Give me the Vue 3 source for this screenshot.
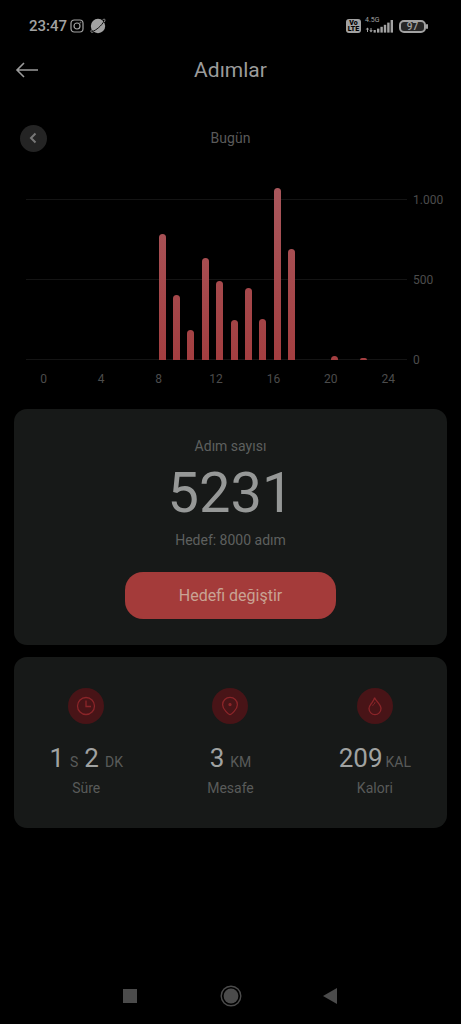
<script setup>
const bars = [
  0, 0, 0, 0, 0, 0, 0, 0, 785, 405, 187, 631, 490, 250, 450, 256, 1068, 687, 0, 0, 28, 0, 14, 0,
]
const chartMax = 1000
const hours = [0, 4, 8, 12, 16, 20, 24]
const levels = ['1.000', '500', '0']
const stats = [
  { icon: 'clock', label: 'Süre', parts: [['1', 'S'], ['2', 'DK']] },
  { icon: 'pin', label: 'Mesafe', parts: [['3', 'KM']] },
  { icon: 'flame', label: 'Kalori', parts: [['209', 'KAL']] },
]
</script>

<template>
  <div class="page">
    <div class="status">
      <span class="clock">23:47</span>
      <svg class="insta" width="14" height="14" viewBox="0 0 14 14" fill="none" stroke="currentColor">
        <rect x="1" y="1" width="12" height="12" rx="3.2" stroke-width="1.2" />
        <circle cx="7" cy="7" r="3" stroke-width="1.2" />
        <circle cx="10.4" cy="3.6" r="0.5" stroke-width="0.6" />
      </svg>
      <svg class="planet" width="16" height="16" viewBox="0 0 16 16">
        <circle cx="8" cy="8" r="7.2" fill="currentColor" />
        <path d="M2 13.6C6.4 12.2 11.4 7.8 14.2 3" stroke="#000" stroke-width="0.9" fill="none" />
        <path d="M1.6 11.6C0.4 13.8 0.8 15 3.4 14M12.6 1.8C14.8 0.6 15.6 1.2 14.4 4" stroke="currentColor" stroke-width="0.9" fill="none" />
      </svg>
      <span class="spring"></span>
      <span class="volte"><span>Vo</span><span>LTE</span></span>
      <span class="signal">
        <span class="net">4.5G</span>
        <svg width="29" height="14" viewBox="0 0 29 14" fill="currentColor">
          <path d="M2.5 8.5L4.2 10.6H3V13H2V10.6H0.6ZM6 13.4L4.3 11.2H5.5V9H6.5V11.2H7.8Z" />
          <rect x="8.6" y="11" width="2.2" height="2.6" />
          <rect x="12" y="9.6" width="2.4" height="4" />
          <rect x="15.4" y="7.8" width="2.4" height="5.8" />
          <rect x="18.8" y="5.8" width="2.4" height="7.8" />
          <rect x="22.2" y="3.6" width="2.4" height="10" />
          <rect x="25.6" y="1" width="2.4" height="12.6" />
        </svg>
      </span>
      <span class="battery">97</span>
    </div>

    <header class="bar">
      <button class="back" type="button" aria-label="Geri">
        <svg width="24" height="16" viewBox="0 0 24 16" fill="none" stroke="currentColor" stroke-width="1.6">
          <path d="M9 1L2 8L9 15M2 8H23" />
        </svg>
      </button>
      <h1>Adımlar</h1>
    </header>

    <div class="day">
      <button class="prev" type="button" aria-label="Önceki gün">
        <svg width="10" height="12" viewBox="0 0 10 12" fill="none" stroke="currentColor" stroke-width="2">
          <path d="M6.5 1.5L2 6L6.5 10.5" />
        </svg>
      </button>
      <span>Bugün</span>
    </div>

    <section class="chart">
      <div class="plot">
        <div v-for="level in levels" :key="level" class="level">
          <span class="line"></span>
          <span class="tag">{{ level }}</span>
        </div>
        <div class="bars">
          <span v-for="(steps, hour) in bars" :key="hour" class="slot">
            <i v-if="steps" :style="{ height: (steps / chartMax) * 100 + '%' }"></i>
          </span>
        </div>
      </div>
      <div class="hours">
        <span v-for="hour in hours" :key="hour">{{ hour }}</span>
      </div>
    </section>

    <section class="card goal">
      <p class="caption">Adım sayısı</p>
      <p class="total">5231</p>
      <p class="target">Hedef: 8000 adım</p>
      <button class="change" type="button">Hedefi değiştir</button>
    </section>

    <section class="card stats">
      <div v-for="stat in stats" :key="stat.label" class="stat">
        <span class="badge">
          <svg width="20" height="20" viewBox="0 0 20 20" fill="none" stroke="currentColor" stroke-width="1.3">
            <template v-if="stat.icon === 'clock'">
              <circle cx="10" cy="10" r="8.5" />
              <path d="M10 4.5V10.5H15" />
            </template>
            <template v-else-if="stat.icon === 'pin'">
              <path d="M10 18.6C8.8 18.6 2.6 13.4 2.6 8.8A7.4 7.4 0 0 1 17.4 8.8C17.4 13.4 11.2 18.6 10 18.6Z" />
              <circle cx="10" cy="8.6" r="1" fill="currentColor" />
            </template>
            <template v-else>
              <path d="M9.6 1.6C10.2 4.6 16 8 16 12.6A6 6 0 0 1 4 12.6C4 9.8 5.6 8.6 6.6 7.2C7.6 5.6 9 4 9.6 1.6Z" />
              <path d="M7.4 9.4C8.8 8.8 9.8 7.6 10 6.2" stroke-width="1" />
            </template>
          </svg>
        </span>
        <p class="value" :class="{ tight: stat.icon === 'flame' }">
          <span v-for="part in stat.parts" :key="part[1]"><b>{{ part[0] }}</b><small>{{ part[1] }}</small></span>
        </p>
        <p class="name">{{ stat.label }}</p>
      </div>
    </section>

    <nav class="system">
      <button type="button" aria-label="Son uygulamalar">
        <svg width="22" height="22" viewBox="0 0 22 22"><rect x="3" y="4" width="14" height="14" fill="currentColor" /></svg>
      </button>
      <button type="button" aria-label="Ana ekran">
        <svg width="22" height="22" viewBox="0 0 22 22">
          <circle cx="11" cy="11" r="9.8" fill="none" stroke="currentColor" stroke-width="1.4" />
          <circle cx="11" cy="11" r="7.4" fill="currentColor" />
        </svg>
      </button>
      <button type="button" aria-label="Geri dön">
        <svg width="22" height="22" viewBox="0 0 22 22"><path d="M3 11L17 3V19Z" fill="currentColor" /></svg>
      </button>
    </nav>
  </div>
</template>

<style>
body {
  background: #000;
}
</style>

<style scoped>
.page {
  display: flex;
  flex-direction: column;
  box-sizing: border-box;
  min-height: 100vh;
  background: #000;
  color: #9b9b9b;
  font-family: Roboto, "Noto Sans", sans-serif;
}
p,
h1 {
  margin: 0;
  font-weight: 400;
}
button {
  padding: 0;
  border: 0;
  background: none;
  color: inherit;
  font: inherit;
}
svg {
  display: block;
}
.status {
  display: flex;
  align-items: center;
  height: 20px;
  padding: 16px 35px 0 29px;
  color: #a2a2a2;
}
.clock {
  font-size: 15px;
  font-weight: 500;
}
.insta {
  margin-left: 3px;
}
.planet {
  margin-left: 6px;
}
.spring {
  flex: 1;
}
.volte {
  display: flex;
  flex-direction: column;
  justify-content: center;
  width: 15px;
  height: 14px;
  border-radius: 3px;
  background: #a2a2a2;
  color: #000;
  font-size: 7px;
  font-weight: 900;
  line-height: 6px;
  text-align: center;
}
.signal {
  position: relative;
  margin: 0 5px 0 4px;
}
.net {
  position: absolute;
  top: -3px;
  left: 0;
  font-size: 7px;
  line-height: 8px;
}
.battery {
  position: relative;
  box-sizing: border-box;
  width: 27px;
  height: 13px;
  border: 2px solid #a2a2a2;
  border-radius: 5px;
  background: #262626;
  font-size: 10px;
  font-weight: 500;
  line-height: 10px;
  text-align: center;
}
.battery::after {
  content: "";
  position: absolute;
  top: 2px;
  right: -4px;
  width: 2px;
  height: 5px;
  border-radius: 1px;
  background: #a2a2a2;
}
.bar,
.day {
  display: grid;
  grid-template-columns: 32px 1fr 32px;
  align-items: center;
  text-align: center;
}
.bar {
  height: 40px;
  margin-top: 14px;
  padding: 0 15px;
}
.bar h1 {
  font-size: 21px;
  line-height: 28px;
}
.day {
  height: 28px;
  margin-top: 34px;
  padding: 0 20px;
  color: #5a5a5a;
  font-size: 14px;
}
.prev {
  display: grid;
  place-items: center;
  width: 27px;
  height: 27px;
  border-radius: 50%;
  background: #242424;
  color: #777;
}
.chart {
  margin-top: 47px;
  padding: 0 14px 0 26px;
  color: #4c4c4c;
  font-size: 12px;
}
.plot {
  position: relative;
  display: flex;
  flex-direction: column;
  justify-content: space-between;
  height: 161px;
}
.level {
  display: flex;
  align-items: center;
  height: 1px;
}
.line {
  flex: 1;
  height: 1px;
  background: #141414;
}
.tag {
  width: 34px;
  margin-left: 6px;
}
.bars {
  position: absolute;
  inset: 0 62px 0 14px;
  display: grid;
  grid-template-columns: repeat(24, 1fr);
}
.slot {
  display: flex;
  align-items: flex-end;
  justify-content: center;
}
.slot i {
  width: 7px;
  border-radius: 4px 4px 0 0;
  background: linear-gradient(to top, #a33e40, #a9575c 172px);
}
.hours {
  display: grid;
  grid-template-columns: repeat(7, 1fr);
  margin: 11px 30px 0 -11px;
  line-height: 16px;
  text-align: center;
}
.card {
  margin: 0 14px;
  border-radius: 13px;
  background: #171918;
}
.goal {
  display: flex;
  flex-direction: column;
  align-items: center;
  margin-top: 22px;
  padding: 27px 0 26px;
  color: #5e605f;
  font-size: 14px;
  line-height: 20px;
}
.total {
  margin: 6px 0;
  color: #969897;
  font-size: 56px;
  line-height: 62px;
}
.change {
  width: 211px;
  height: 47px;
  margin-top: 22px;
  border-radius: 18px;
  background: #a43b3a;
  color: #c9a394;
  font-size: 16px;
}
.stats {
  display: grid;
  grid-template-columns: repeat(3, 1fr);
  margin-top: 12px;
  padding: 31px 0 30px;
}
.stat {
  display: flex;
  flex-direction: column;
  align-items: center;
  color: #595b5a;
}
.badge {
  display: grid;
  place-items: center;
  width: 36px;
  height: 36px;
  border-radius: 50%;
  background: #481417;
  color: #8b2529;
}
.value {
  display: flex;
  gap: 6px;
  margin-top: 18px;
  line-height: 32px;
}
.value b {
  color: #a0a2a1;
  font-size: 26px;
  font-weight: 400;
}
.value small {
  margin-left: 6px;
  font-size: 14px;
}
.value.tight small {
  margin-left: 3px;
}
.name {
  font-size: 14px;
  line-height: 20px;
}
.system {
  display: grid;
  grid-template-columns: repeat(3, 100px);
  justify-content: center;
  justify-items: center;
  margin-top: auto;
  padding: 16px 0 17px;
  color: #4b4b4b;
}
</style>
